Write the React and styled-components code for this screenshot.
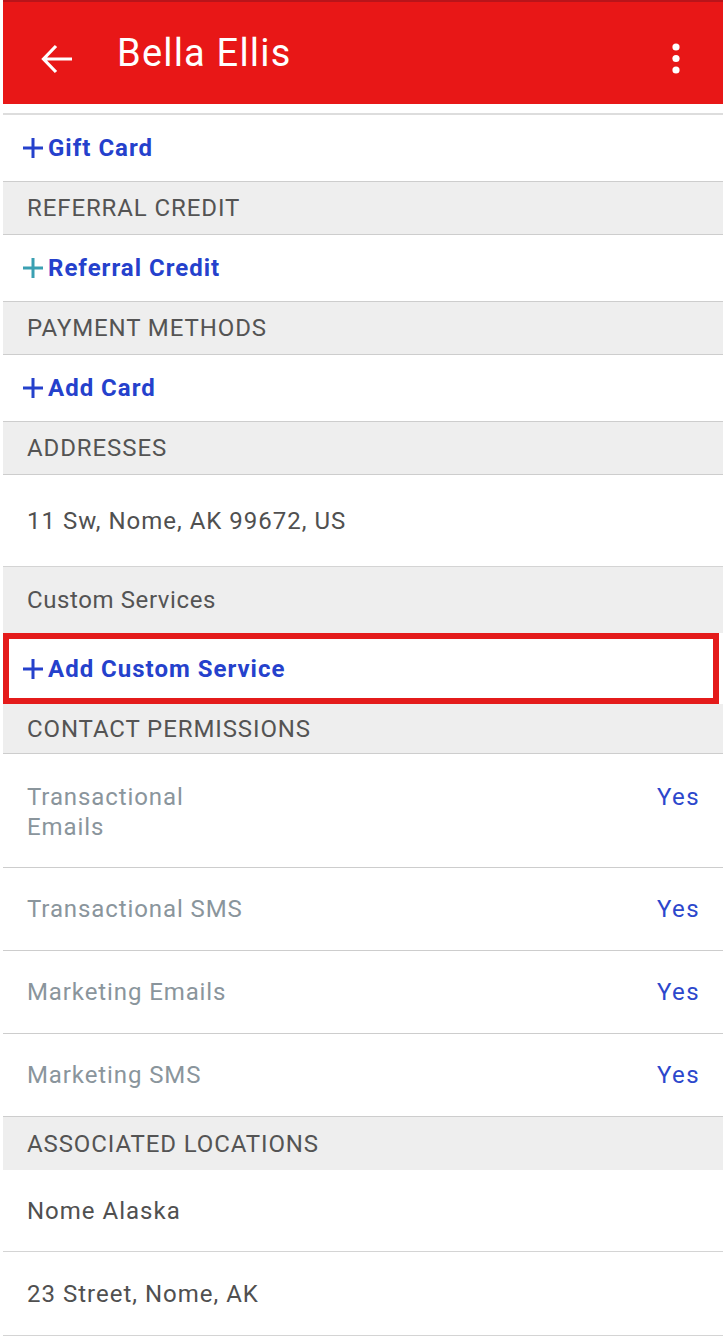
import React from "react";
import styled, { createGlobalStyle } from "styled-components";

const GlobalStyle = createGlobalStyle`
  html, body {
    margin: 0;
    padding: 0;
    background: #ffffff;
  }
  body {
    font-family: Roboto, "Liberation Sans", sans-serif;
  }
`;

const Page = styled.div`
  width: 723px;
  padding-left: 3px;
  box-sizing: border-box;
  background: #ffffff;
`;

const AppBar = styled.header`
  height: 102px;
  border-top: 2px solid #b8141a;
  background: #e81717;
  display: flex;
  align-items: center;
  padding: 0 43px 0 38px;
  color: #ffffff;
`;

const Title = styled.h1`
  flex: 1;
  margin: 0 0 0 44px;
  font-size: 38px;
  font-weight: 400;
  letter-spacing: 1.2px;
`;

const IconButton = styled.div`
  display: flex;
  align-items: center;
  justify-content: center;
  margin-top: 12px;
`;

const TopGap = styled.div`
  height: 9px;
  border-bottom: 2px solid #dddddd;
`;

const SectionHead = styled.div`
  height: ${(p) => p.h || 52}px;
  background: #eeeeee;
  border-bottom: ${(p) => (p.noLine ? "none" : "1px solid #cdcdcd")};
  display: flex;
  align-items: center;
  padding-left: 24px;
  font-size: 24px;
  letter-spacing: ${(p) => (p.plain ? "0.6px" : "0.9px")};
  color: #545454;
  text-transform: ${(p) => (p.plain ? "none" : "uppercase")};
`;

const ActionRow = styled.div`
  height: 66px;
  border-bottom: 1px solid #cdcdcd;
  display: flex;
  align-items: center;
  padding-left: 20px;
  gap: 5px;
  font-size: 24px;
  font-weight: 700;
  letter-spacing: 1px;
  color: #2541cc;
  background: #ffffff;
`;

const HighlightRow = styled(ActionRow)`
  height: 59px;
  border: 6px solid #e41b1b;
  margin-right: 4px;
  padding-left: 14px;
`;

const InfoRow = styled.div`
  height: ${(p) => p.h || 82}px;
  border-bottom: 1px solid #d4d4d4;
  display: flex;
  align-items: center;
  padding-left: 24px;
  font-size: 24px;
  letter-spacing: 1px;
  color: #505050;
`;

const PermRow = styled.div`
  height: ${(p) => p.h || 83}px;
  border-bottom: 1px solid #cdcdcd;
  display: flex;
  align-items: ${(p) => (p.top ? "flex-start" : "center")};
  justify-content: space-between;
  padding: ${(p) => (p.top ? "28px" : "0")} 23px 0 24px;
  box-sizing: border-box;
  font-size: 24px;
  line-height: 30px;
  letter-spacing: 0.9px;
`;

const PermLabel = styled.span`
  color: #8a959c;
  max-width: ${(p) => (p.wrap ? "200px" : "none")};
`;

const PermValue = styled.span`
  color: #2c47cc;
  letter-spacing: 1.4px;
`;

const Plus = ({ color = "#2541cc" }) => (
  <svg width="20" height="20" viewBox="0 0 20 20">
    <path d="M10 0v20M0 10h20" stroke={color} strokeWidth="3" fill="none" />
  </svg>
);

const BackArrow = () => (
  <svg width="32" height="30" viewBox="0 0 32 30">
    <path
      d="M31 15H3M15 2L2.5 15L15 28"
      stroke="#ffffff"
      strokeWidth="3.2"
      fill="none"
    />
  </svg>
);

const Kebab = () => (
  <svg width="8" height="32" viewBox="0 0 8 32">
    <circle cx="4" cy="4" r="3.6" fill="#ffffff" />
    <circle cx="4" cy="15.5" r="3.6" fill="#ffffff" />
    <circle cx="4" cy="27" r="3.6" fill="#ffffff" />
  </svg>
);

const permissions = [
  { label: "Transactional Emails", h: 114, top: true },
  { label: "Transactional SMS" },
  { label: "Marketing Emails" },
  { label: "Marketing SMS" },
];

const App = () => {
  return (
    <Page>
      <GlobalStyle />
      <AppBar>
        <IconButton>
          <BackArrow />
        </IconButton>
        <Title>Bella Ellis</Title>
        <IconButton>
          <Kebab />
        </IconButton>
      </AppBar>
      <TopGap />

      <ActionRow>
        <Plus />
        Gift Card
      </ActionRow>
      <SectionHead>Referral Credit</SectionHead>
      <ActionRow>
        <Plus color="#3aa0b2" />
        Referral Credit
      </ActionRow>
      <SectionHead>Payment Methods</SectionHead>
      <ActionRow>
        <Plus />
        Add Card
      </ActionRow>
      <SectionHead>Addresses</SectionHead>
      <InfoRow h={91}>11 Sw, Nome, AK 99672, US</InfoRow>

      <SectionHead plain noLine h={66}>
        Custom Services
      </SectionHead>
      <HighlightRow>
        <Plus />
        Add Custom Service
      </HighlightRow>

      <SectionHead h={49}>Contact Permissions</SectionHead>
      {permissions.map((p) => (
        <PermRow key={p.label} h={p.h} top={p.top}>
          <PermLabel wrap={p.top}>{p.label}</PermLabel>
          <PermValue>Yes</PermValue>
        </PermRow>
      ))}

      <SectionHead noLine h={53}>
        Associated Locations
      </SectionHead>
      <InfoRow h={81}>Nome Alaska</InfoRow>
      <InfoRow h={83}>23 Street, Nome, AK</InfoRow>
    </Page>
  );
};

export default App;
